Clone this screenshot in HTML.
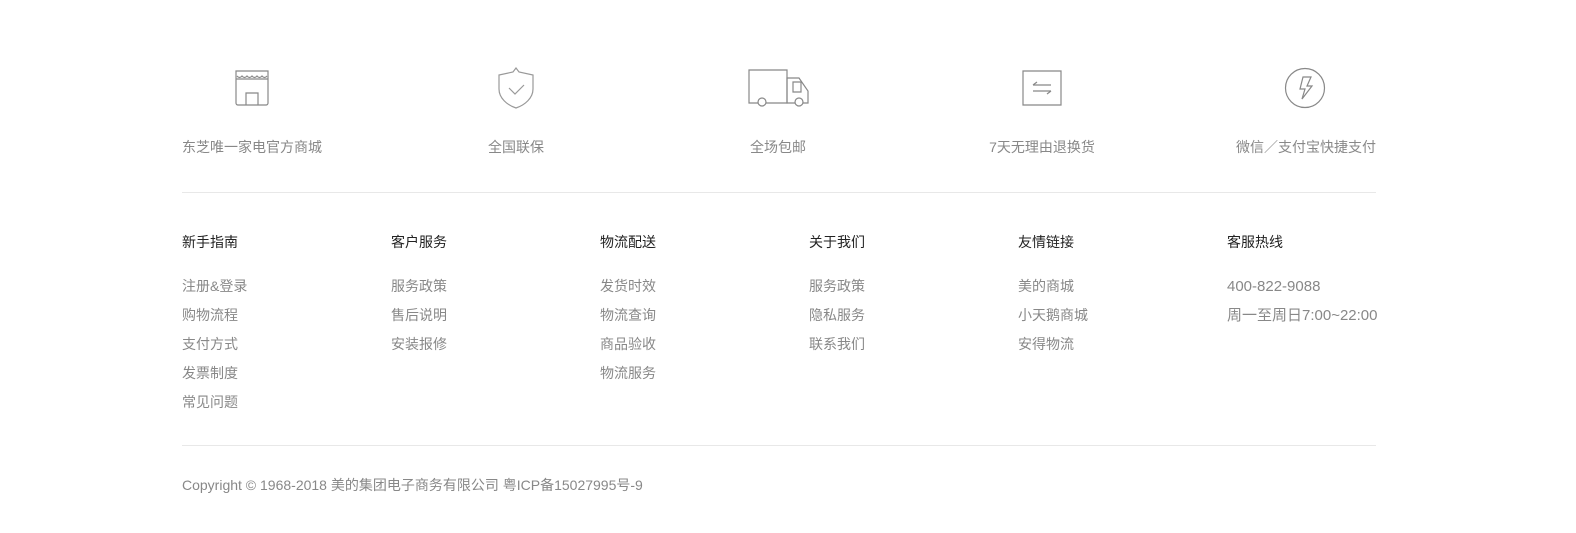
<!DOCTYPE html>
<html><head><meta charset="utf-8"><style>
body{margin:0;background:#fff;font-family:"Liberation Sans","Noto Sans CJK SC",sans-serif;}
.a{position:absolute;white-space:nowrap}
.f{font-size:14px;color:#888;top:137px;transform:translateX(-50%)}
.h{font-size:14px;color:#222;top:232px}
.l{font-size:14px;color:#888}
.hr{position:absolute;left:182px;width:1194px;height:1px;background:#e8e8e8}
svg{position:absolute}
</style></head><body>
<svg style="left:230px;top:66px" width="44" height="44" viewBox="0 0 44 44" fill="none" stroke="#888" stroke-width="1.2">
<path d="M6 5h32v8H6z M6 13v24a2 2 0 0 0 2 2h28a2 2 0 0 0 2-2V13"/>
<path d="M7 10q2.5 3 5 0q2.5 3 5 0q2.5 3 5 0q2.5 3 5 0q2.5 3 5 0q2.5 3 5 0"/>
<path d="M16 39V27h12v12"/></svg>
<svg style="left:496px;top:66px" width="40" height="44" viewBox="0 0 40 44" fill="none" stroke="#999" stroke-width="1.2">
<path d="M20 2l-3 4-14 3v14c0 9 8 16 17 19c9-3 17-10 17-19V9l-14-3z"/><path d="M13 22l6 6 9-9"/></svg>
<svg style="left:748px;top:68px" width="64" height="40" viewBox="0 0 64 40" fill="none" stroke="#888" stroke-width="1.2">
<path d="M1 2h38v33H1z"/><path d="M39 10h12l9 13v12H39z"/><path d="M45 14h8v10h-8z"/>
<circle cx="14" cy="34" r="4" fill="#fff"/><circle cx="51" cy="34" r="4" fill="#fff"/></svg>
<svg style="left:1022px;top:70px" width="40" height="36" viewBox="0 0 40 36" fill="none" stroke="#888" stroke-width="1.2">
<path d="M1 1h38v34H1z"/><path d="M11 15h18M11 15l4-3M11 21h18M29 21l-4 3"/></svg>
<svg style="left:1284px;top:67px" width="42" height="42" viewBox="0 0 42 42" fill="none" stroke="#888" stroke-width="1.2">
<circle cx="21" cy="21" r="19.5"/><path d="M19 10h8l-4 9h5l-10 13 3-10h-5z"/></svg>
<div class="a f" style="left:252px">东芝唯一家电官方商城</div>
<div class="a f" style="left:516px">全国联保</div>
<div class="a f" style="left:778px">全场包邮</div>
<div class="a f" style="left:1042px">7天无理由退换货</div>
<div class="a f" style="left:1306px">微信／支付宝快捷支付</div>
<div class="hr" style="top:192px"></div>
<div class="a h" style="left:182px">新手指南</div>
<div class="a h" style="left:391px">客户服务</div>
<div class="a h" style="left:600px">物流配送</div>
<div class="a h" style="left:809px">关于我们</div>
<div class="a h" style="left:1018px">友情链接</div>
<div class="a h" style="left:1227px">客服热线</div>
<div class="a l" style="left:182px;top:272px;line-height:29px">注册&amp;登录<br>购物流程<br>支付方式<br>发票制度<br>常见问题</div>
<div class="a l" style="left:391px;top:272px;line-height:29px">服务政策<br>售后说明<br>安装报修</div>
<div class="a l" style="left:600px;top:272px;line-height:29px">发货时效<br>物流查询<br>商品验收<br>物流服务</div>
<div class="a l" style="left:809px;top:272px;line-height:29px">服务政策<br>隐私服务<br>联系我们</div>
<div class="a l" style="left:1018px;top:272px;line-height:29px">美的商城<br>小天鹅商城<br>安得物流</div>
<div class="a l" style="left:1227px;top:272px;line-height:29px;font-size:15px">400-822-9088<br>周一至周日7:00~22:00</div>
<div class="hr" style="top:445px"></div>
<div class="a" style="left:182px;top:475px;font-size:14px;color:#888">Copyright © 1968-2018 美的集团电子商务有限公司 粤ICP备15027995号-9</div>
</body></html>
